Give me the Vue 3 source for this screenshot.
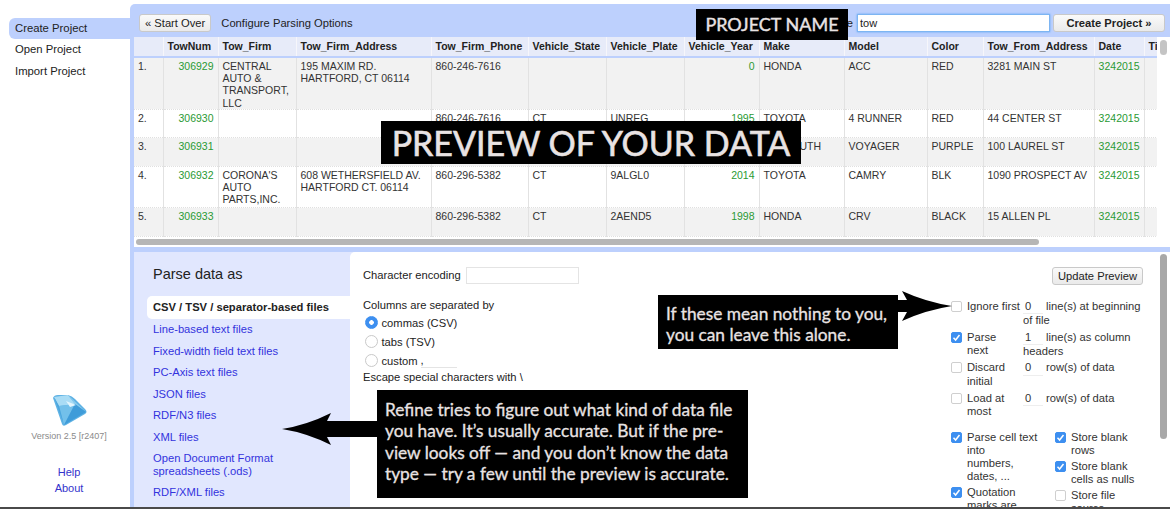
<script setup>
const columns = [
  { name: '', w: 29 }, { name: 'TowNum', w: 55 }, { name: 'Tow_Firm', w: 78 }, { name: 'Tow_Firm_Address', w: 135 },
  { name: 'Tow_Firm_Phone', w: 97 }, { name: 'Vehicle_State', w: 78 }, { name: 'Vehicle_Plate', w: 78 }, { name: 'Vehicle_Year', w: 75 },
  { name: 'Make', w: 85 }, { name: 'Model', w: 83 }, { name: 'Color', w: 56 }, { name: 'Tow_From_Address', w: 111 },
  { name: 'Date', w: 50 }, { name: 'Time', w: 40 }
]
const rows = [
  { h: 52, c: ['1.', '306929', 'CENTRAL AUTO & TRANSPORT, LLC', '195 MAXIM RD. HARTFORD, CT 06114', '860-246-7616', '', '', '0', 'HONDA', 'ACC', 'RED', '3281 MAIN ST', '3242015', ''] },
  { h: 28, c: ['2.', '306930', '', '', '860-246-7616', 'CT', 'UNREG', '1995', 'TOYOTA', '4 RUNNER', 'RED', '44 CENTER ST', '3242015', ''] },
  { h: 29, c: ['3.', '306931', '', '', '860-246-7616', 'CT', 'UNREG', '1999', 'PLYMOUTH', 'VOYAGER', 'PURPLE', '100 LAUREL ST', '3242015', ''] },
  { h: 41, c: ['4.', '306932', "CORONA'S AUTO PARTS,INC.", '608 WETHERSFIELD AV. HARTFORD CT. 06114', '860-296-5382', 'CT', '9ALGL0', '2014', 'TOYOTA', 'CAMRY', 'BLK', '1090 PROSPECT AV', '3242015', ''] },
  { h: 29, c: ['5.', '306933', '', '', '860-296-5382', 'CT', '2AEND5', '1998', 'HONDA', 'CRV', 'BLACK', '15 ALLEN PL', '3242015', ''] }
]
const numeric = [1, 7, 12]
const formats = ['Line-based text files', 'Fixed-width field text files', 'PC-Axis text files', 'JSON files', 'RDF/N3 files', 'XML files', 'Open Document Format spreadsheets (.ods)', 'RDF/XML files']
const lineOptions = [
  { on: false, label: 'Ignore first', val: '0', after: 'line(s) at beginning of file' },
  { on: true, label: 'Parse\nnext', val: '1', after: 'line(s) as column headers' },
  { on: false, label: 'Discard\ninitial', val: '0', after: 'row(s) of data' },
  { on: false, label: 'Load at\nmost', val: '0', after: 'row(s) of data' }
]
const leftChecks = [
  { on: true, label: 'Parse cell text\ninto\nnumbers,\ndates, ...' },
  { on: true, label: 'Quotation\nmarks are\nused to\nenclose cells' }
]
const rightChecks = [
  { on: true, label: 'Store blank\nrows' },
  { on: true, label: 'Store blank\ncells as nulls' },
  { on: false, label: 'Store file\nsource' }
]
</script>

<template>
  <div class="app">
    <aside class="side">
      <nav class="nav">
        <a class="nav-item active">Create Project</a>
        <a class="nav-item">Open Project</a>
        <a class="nav-item">Import Project</a>
      </nav>
      <div class="side-foot">
        <svg class="gem" width="36" height="34" viewBox="0 0 36 34">
          <path d="M1 4 Q2 1 6 1 L16 1 Q20 2 23 5 L33 15 Q36 18 33 20 L14 31 Q11 33 10 30 Z" fill="#5fb2e4" />
          <polygon points="2,3 16,1 23,10 7,12" fill="#a9dcf5" />
          <polygon points="16,1 34,18 23,10" fill="#8accef" />
          <polygon points="7,12 23,10 12,31" fill="#73c0ea" />
          <polygon points="23,10 34,18 12,31" fill="#3f9cd9" />
          <polygon points="2,3 7,12 12,31" fill="#4ba6de" />
          <polygon points="14,7 24,11 18,13" fill="#e3f5fd" />
        </svg>
        <div class="version">Version 2.5 [r2407]</div>
        <a class="foot-link help">Help</a>
        <a class="foot-link">About</a>
      </div>
    </aside>

    <main class="main">
      <header class="bar">
        <button class="btn">« Start Over</button>
        <span class="bar-title">Configure Parsing Options</span>
        <span class="name-label">Project name</span>
        <input class="name-input" value="tow" />
        <button class="btn strong">Create Project »</button>
      </header>

      <section class="preview">
        <div class="table-wrap">
          <table class="grid">
            <colgroup>
              <col v-for="c in columns" :key="c.name" :style="{ width: c.w + 'px' }" />
            </colgroup>
            <thead>
              <tr><th v-for="c in columns" :key="c.name">{{ c.name }}</th></tr>
            </thead>
            <tbody>
              <tr v-for="(r, i) in rows" :key="i" :class="{ odd: i % 2 === 0 }" :style="{ height: r.h + 'px' }">
                <td v-for="(v, j) in r.c" :key="j" :class="{ num: numeric.includes(j) }">{{ v }}</td>
              </tr>
            </tbody>
          </table>
          <div class="vscroll"><span class="vthumb"></span></div>
        </div>
        <div class="hscroll"><span class="hthumb"></span></div>
      </section>

      <section class="parser">
        <div class="formats">
          <h2 class="formats-title">Parse data as</h2>
          <div class="format selected">CSV / TSV / separator-based files</div>
          <a v-for="f in formats" :key="f" class="format">{{ f }}</a>
        </div>
        <div class="options">
          <div class="opts-left">
            <div class="enc">Character encoding <span class="enc-input"></span></div>
            <div class="sep-title">Columns are separated by</div>
            <label class="radio-row"><span class="radio on"></span>commas (CSV)</label>
            <label class="radio-row"><span class="radio"></span>tabs (TSV)</label>
            <label class="radio-row"><span class="radio"></span>custom <span class="mini">,</span></label>
            <div class="escape">Escape special characters with \</div>
          </div>
          <div class="opts-right">
            <div class="update-row"><button class="btn">Update Preview</button></div>
            <div v-for="o in lineOptions" :key="o.label" class="line-opt">
              <span class="check" :class="{ on: o.on }"><svg v-if="o.on" width="9" height="9" viewBox="0 0 9 9"><path d="M1.5 4.8 3.6 7 7.5 2" fill="none" stroke="#fff" stroke-width="1.5" /></svg></span>
              <span class="line-label">{{ o.label }}</span>
              <span class="line-text"><span class="line-val">{{ o.val }}</span>{{ o.after }}</span>
            </div>
            <div class="check-cols">
              <div class="check-col wide">
                <div v-for="o in leftChecks" :key="o.label" class="check-opt">
                  <span class="check" :class="{ on: o.on }"><svg v-if="o.on" width="9" height="9" viewBox="0 0 9 9"><path d="M1.5 4.8 3.6 7 7.5 2" fill="none" stroke="#fff" stroke-width="1.5" /></svg></span>
                  <span class="check-label">{{ o.label }}</span>
                </div>
              </div>
              <div class="check-col">
                <div v-for="o in rightChecks" :key="o.label" class="check-opt">
                  <span class="check" :class="{ on: o.on }"><svg v-if="o.on" width="9" height="9" viewBox="0 0 9 9"><path d="M1.5 4.8 3.6 7 7.5 2" fill="none" stroke="#fff" stroke-width="1.5" /></svg></span>
                  <span class="check-label">{{ o.label }}</span>
                </div>
              </div>
            </div>
          </div>
          <div class="pscroll"><span class="pthumb"></span></div>
        </div>
      </section>
    </main>

    <div class="note note-name">PROJECT NAME</div>
    <div class="note note-preview">PREVIEW OF YOUR DATA</div>
    <div class="note note-ignore">If these mean nothing to you,<br />you can leave this alone.</div>
    <div class="note note-refine">Refine tries to figure out what kind of data file<br />you have. It’s usually accurate. But if the pre-<br />view looks off — and you don’t know the data<br />type — try a few until the preview is accurate.</div>
    <svg class="arrow arrow-right" width="58" height="34" viewBox="0 0 58 34"><path d="M0 10H11L6 1Q30 12 56 16Q30 20 6 31L11 22H0Z" fill="#000" /></svg>
    <svg class="arrow arrow-left" width="98" height="36" viewBox="0 0 98 36"><path d="M98 10H46L50 2Q26 14 1 18Q26 22 50 34L46 26H98Z" fill="#000" /></svg>
  </div>
</template>

<style>
html, body { margin: 0; background: #fff; }
</style>

<style scoped>
.app {
  position: relative;
  display: flex;
  width: 1170px;
  height: 509px;
  box-sizing: border-box;
  border-bottom: 2px solid #4a4a4a;
  overflow: hidden;
  font-family: "Liberation Sans", Arial, sans-serif;
  font-size: 11.2px;
  color: #222;
  background: #fff;
}
.side {
  width: 130px;
  flex: none;
  display: flex;
  flex-direction: column;
  justify-content: space-between;
  padding: 17.5px 0 11px 9px;
  box-sizing: border-box;
}
.nav { display: flex; flex-direction: column; }
.nav-item {
  height: 21.5px;
  line-height: 21.5px;
  padding-left: 6px;
  font-size: 11.3px;
  color: #222;
}
.nav-item.active { background: #bdd0fd; border-radius: 6px 0 0 6px; }
.side-foot {
  display: flex;
  flex-direction: column;
  align-items: center;
  margin-left: -9px;
  padding-left: 8px;
}
.gem { margin-bottom: 1px; margin-left: 1px; }
.version { font-size: 9px; color: #8a8a8a; margin-top: 2px; margin-bottom: 23px; white-space: nowrap; }
.foot-link { color: #3333cc; font-size: 11px; line-height: 16px; }
.main {
  flex: 1;
  margin-top: 4px;
  display: flex;
  flex-direction: column;
  min-width: 0;
  background: #bdd0fd;
  border-top-left-radius: 5px;
}
.bar {
  height: 33px;
  flex: none;
  display: flex;
  align-items: center;
  padding: 4px 5px 0 9px;
  box-sizing: border-box;
}
.btn {
  height: 18px;
  padding: 0 5px;
  border: 1px solid #c9c9c9;
  border-radius: 3px;
  background: linear-gradient(#fafafa, #eaeaea);
  font: 11.2px "Liberation Sans", Arial, sans-serif;
  color: #222;
  white-space: nowrap;
}
.btn.strong { font-weight: 700; width: 112px; margin-left: 3px; }
.bar-title { margin-left: 10px; font-size: 11.2px; color: #222; }
.name-label { margin-left: auto; margin-right: 4px; color: #222; }
.name-input {
  width: 193px;
  height: 18px;
  box-sizing: border-box;
  padding: 0 2px;
  border: 1px solid #7db5f2;
  box-shadow: 0 0 2px #5da5f5;
  font: 11px "Liberation Sans", Arial, sans-serif;
  color: #222;
  outline: none;
}
.preview {
  height: 210px;
  flex: none;
  margin-left: 4px;
  background: #fff;
  display: flex;
  flex-direction: column;
}
.table-wrap { position: relative; height: 200px; overflow: hidden; padding-right: 13px; }
.grid {
  table-layout: fixed;
  width: 1050px;
  border-collapse: collapse;
  font-size: 10.5px;
  line-height: 12.2px;
  color: #333;
}
.grid th {
  height: 19px;
  padding: 0 4px;
  background: #e7ebf9;
  border-bottom: 2px solid #bdd0fd;
  border-right: 1px solid #f6f6fb;
  text-align: left;
  font-weight: 700;
  font-size: 10.5px;
  white-space: nowrap;
  overflow: hidden;
  color: #222;
}
.grid td {
  padding: 2px 4px 0;
  vertical-align: top;
  border-right: 1px solid #e2e2e2;
  border-bottom: 1px dotted #e0e0e0;
  overflow: hidden;
  box-sizing: border-box;
}
.grid tr.odd td { background: #f2f2f2; }
.grid td.num { color: #2a9a34; text-align: right; }
.vscroll { position: absolute; top: 0; right: 0; bottom: 0; width: 13px; background: #fff; }
.vthumb { position: absolute; top: 3px; left: 3px; width: 7px; height: 15px; border-radius: 4px; background: #c4c4c4; }
.hscroll { position: relative; flex: 1; background: #fff; }
.hthumb { position: absolute; left: 2px; top: 2px; width: 903px; height: 6px; border-radius: 3px; background: #b6b6b6; }
.parser {
  flex: 1;
  min-height: 0;
  margin-top: 5px;
  display: flex;
  background: #e1e7fe;
  margin-left: 4px;
}
.formats { width: 216px; flex: none; padding: 13px 0 0 13px; box-sizing: border-box; }
.formats-title { margin: 0 0 13px 6px; font-size: 14.5px; font-weight: 400; line-height: 18px; color: #222; }
.format {
  display: block;
  padding: 4.5px 0 4.5px 6px;
  line-height: 12.5px;
  color: #3333dd;
  width: 180px;
}
.format.selected {
  width: auto;
  padding: 5px 0 5px 6px;
  background: #fff;
  border-radius: 5px 0 0 5px;
  color: #222;
  font-weight: 700;
}
.options {
  position: relative;
  flex: 1;
  display: flex;
  background: #fff;
  border-top-left-radius: 5px;
  overflow: hidden;
}
.opts-left { width: 601px; flex: none; padding: 15px 0 0 13px; box-sizing: border-box; }
.enc { display: flex; align-items: center; gap: 5px; height: 16px; }
.enc-input { width: 111px; height: 15px; border: 1px solid #e4e4e4; }
.sep-title { margin-top: 16px; margin-bottom: 1px; line-height: 13px; }
.radio-row { display: flex; align-items: center; height: 19px; }
.radio {
  width: 11px; height: 11px; border: 0.5px solid #c9c9c9; border-radius: 50%;
  margin: 0 3.5px 0 2px; background: #fff; box-sizing: content-box;
}
.radio.on { background: radial-gradient(circle, #fff 0 2px, #3d8ff0 2.6px); border-color: #3d8ff0; }
.mini { display: inline-block; width: 36px; margin-left: 3px; border-bottom: 1px solid #e4e4e4; height: 13px; line-height: 13px; }
.escape { margin-top: 1px; line-height: 13px; }
.opts-right { width: 199px; flex: none; box-sizing: border-box; }
.update-row { padding: 15px 7px 0 0; height: 48px; box-sizing: border-box; text-align: right; }
.update-row .btn { width: 91px; padding: 0; }
.line-opt {
  display: grid;
  grid-template-columns: 16px 56px 1fr;
  line-height: 13.3px;
  padding-right: 6px;
  min-height: 30.7px;
  color: #333;
}
.line-label, .check-label { white-space: pre-line; }
.check {
  display: flex;
  align-items: center;
  justify-content: center;
  width: 11px;
  height: 11px;
  margin-top: 1px;
  border: 0.5px solid #cfcfcf;
  border-radius: 2px;
  background: #fff;
  box-sizing: border-box;
}
.check.on { background: #3d8ff0; border-color: #3d8ff0; }
.line-val {
  display: inline-block;
  width: 20px;
  padding-left: 2px;
  margin-right: 3px;
  box-sizing: border-box;
  border-bottom: 1px solid #eee;
}
.check-cols { display: flex; margin-top: 8px; color: #333; line-height: 13px; }
.check-col { width: 90px; }
.check-col.wide { width: 104px; }
.check-opt { display: grid; grid-template-columns: 16px 1fr; margin-bottom: 3px; }
.pscroll { position: absolute; top: 2px; right: 2px; width: 9px; height: 185px; }
.pthumb { position: absolute; top: 0; bottom: 0; left: 1px; width: 7px; border-radius: 4px; background: #a8a8a8; }
.note {
  position: absolute;
  background: #000;
  color: #e9e3e3;
  font-family: Lato, "Liberation Sans", sans-serif;
  font-weight: 400;
  -webkit-text-stroke: 0.3px #e9e3e3;
  box-sizing: border-box;
  white-space: nowrap;
}
.note-name { left: 696px; top: 9px; width: 152px; height: 31px; line-height: 31px; text-align: center; font-size: 18px; -webkit-text-stroke-width: 0.4px; }
.note-preview { left: 381px; top: 121px; width: 420px; height: 43px; line-height: 43px; text-align: center; font-size: 34px; -webkit-text-stroke-width: 0.6px; }
.note-ignore { left: 658px; top: 295px; width: 240px; height: 54px; padding: 9px 0 0 8px; font-size: 17.3px; line-height: 20.5px; }
.note-refine { left: 377px; top: 390px; width: 371px; height: 108px; padding: 9px 0 0 8px; font-size: 17.3px; line-height: 21.3px; }
.arrow { position: absolute; }
.arrow-right { left: 896px; top: 290px; }
.arrow-left { left: 281px; top: 411px; }
</style>
